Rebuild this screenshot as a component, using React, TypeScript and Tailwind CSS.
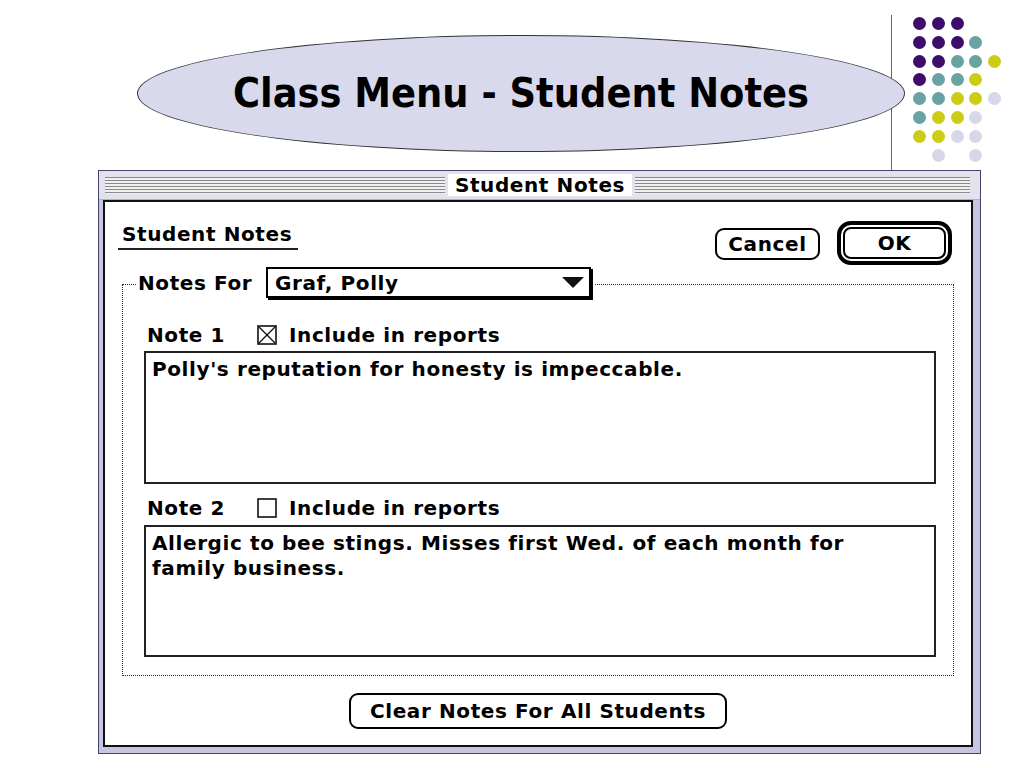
import React from "react";

const dotRows = ["PPP..", "PPPT.", "PPTTY", "PTTY.", "TTYYL", "TYYL.", "YYLL.", ".L.L."];
const dotColor: Record<string, string> = {
  P: "bg-[#3e0c6a]",
  T: "bg-[#68a2a2]",
  Y: "bg-[#cdcd16]",
  L: "bg-[#d7d7ea]",
  ".": "bg-transparent",
};

function CheckBox({ checked }: { checked: boolean }) {
  return (
    <svg width="20" height="20" viewBox="0 0 20 20" className="block">
      <rect x="1" y="1" width="18" height="18" fill="white" stroke="#111" strokeWidth="1.6" />
      {checked && (
        <g stroke="#111" strokeWidth="1.3">
          <line x1="2" y1="2" x2="18" y2="18" />
          <line x1="18" y1="2" x2="2" y2="18" />
        </g>
      )}
    </svg>
  );
}

export default function App() {
  return (
    <div className="w-[1024px] h-[768px] bg-white overflow-hidden font-['DejaVu_Sans',sans-serif] text-black">
      {/* Slide header */}
      <div className="flex items-start h-[170px]">
        <div className="relative z-10 ml-[137px] mt-[35px] w-[768px] h-[117px] rounded-[50%] border border-[#333] bg-[#d9d9ed] flex items-center justify-center">
          <span className="font-['DejaVu_Sans_Condensed',sans-serif] font-bold text-[41px] leading-none">
            Class Menu - Student Notes
          </span>
        </div>
        <div className="ml-[-14px] mt-[15px] w-px h-[155px] bg-[#666]" />
        <div className="ml-[21px] mt-[17px] grid grid-cols-[repeat(5,13px)] gap-[5.8px]">
          {dotRows.map((row, r) =>
            row.split("").map((c, i) => (
              <div key={`${r}-${i}`} className={`w-[13px] h-[13px] rounded-full ${dotColor[c]}`} />
            ))
          )}
        </div>
      </div>

      {/* Window */}
      <div className="ml-[98px] w-[883px] h-[584px] border border-[#44446a] bg-[#c6c6e2] flex flex-col">
        {/* Title bar */}
        <div className="h-[29px] flex items-center pl-[6px] pr-[10px] bg-[#e2e2ee] border-b border-[#b0b0cc]">
          <div className="w-[340px] h-[17px] bg-[repeating-linear-gradient(to_bottom,#8a8a8a_0px,#8a8a8a_1.5px,#f0f0f0_1.5px,#f0f0f0_3px)]" />
          <div className="ml-[3px] mr-[3px] w-[184px] h-[22px] bg-white flex items-center justify-center font-bold text-[20px] leading-[20px] tracking-[0.6px]">
            Student Notes
          </div>
          <div className="flex-1 h-[17px] bg-[repeating-linear-gradient(to_bottom,#8a8a8a_0px,#8a8a8a_1.5px,#f0f0f0_1.5px,#f0f0f0_3px)]" />
        </div>

        {/* Content */}
        <div className="ml-[4px] mr-[7px] mb-[6px] flex-1 border-2 border-[#111] bg-white flex flex-col font-bold text-[20px] leading-[20px] tracking-[0.6px]">
          {/* header row */}
          <div className="mt-[19px] pl-[13px] pr-[19px] flex items-start justify-between">
            <div className="mt-[3px] w-[180px] pl-[4px] pb-[4px] border-b-2 border-[#222]">Student Notes</div>
            <div className="flex items-start gap-[17px]">
              <div className="mt-[7px] w-[105px] h-[32px] border-2 border-black rounded-[9px] flex items-center justify-center">
                Cancel
              </div>
              <div className="w-[115px] h-[44px] border-4 border-black rounded-[14px] p-[2px]">
                <div className="h-full border-2 border-black rounded-[8px] flex items-center justify-center">OK</div>
              </div>
            </div>
          </div>

          {/* group */}
          <div className="mt-[19px] ml-[17px] mr-[17px] border border-dotted border-[#222] pb-[18px]">
            <div className="-mt-[18px] ml-[14px] w-fit bg-white pl-[1px] pr-[4px] flex items-center">
              <span className="w-[128px]">Notes For</span>
              <div className="w-[325px] h-[31px] border-2 border-black shadow-[2px_2px_0_#000] bg-white flex items-center justify-between pl-[7px] pr-[5px]">
                <span>Graf, Polly</span>
                <svg width="22" height="11" viewBox="0 0 22 11">
                  <polygon points="0,0 22,0 11,11" fill="#111" />
                </svg>
              </div>
            </div>

            <div className="mt-[27px] ml-[24px] h-[20px] flex items-center">
              <span className="w-[110px]">Note 1</span>
              <CheckBox checked />
              <span className="ml-[12px]">Include in reports</span>
            </div>
            <div className="mt-[6px] ml-[21px] w-[792px] h-[133px] border-2 border-[#222] pl-[6px]">
              <p className="mt-[4px] leading-[25px]">Polly's reputation for honesty is impeccable.</p>
            </div>

            <div className="mt-[14px] ml-[24px] h-[20px] flex items-center">
              <span className="w-[110px]">Note 2</span>
              <CheckBox checked={false} />
              <span className="ml-[12px]">Include in reports</span>
            </div>
            <div className="mt-[7px] ml-[21px] w-[792px] h-[132px] border-2 border-[#222] pl-[6px]">
              <p className="mt-[4px] leading-[25px]">
                Allergic to bee stings. Misses first Wed. of each month for
                <br />
                family business.
              </p>
            </div>
          </div>

          <div className="mt-[17px] self-center w-[378px] h-[36px] border-2 border-black rounded-[9px] flex items-center justify-center">
            Clear Notes For All Students
          </div>
        </div>
      </div>
    </div>
  );
}
